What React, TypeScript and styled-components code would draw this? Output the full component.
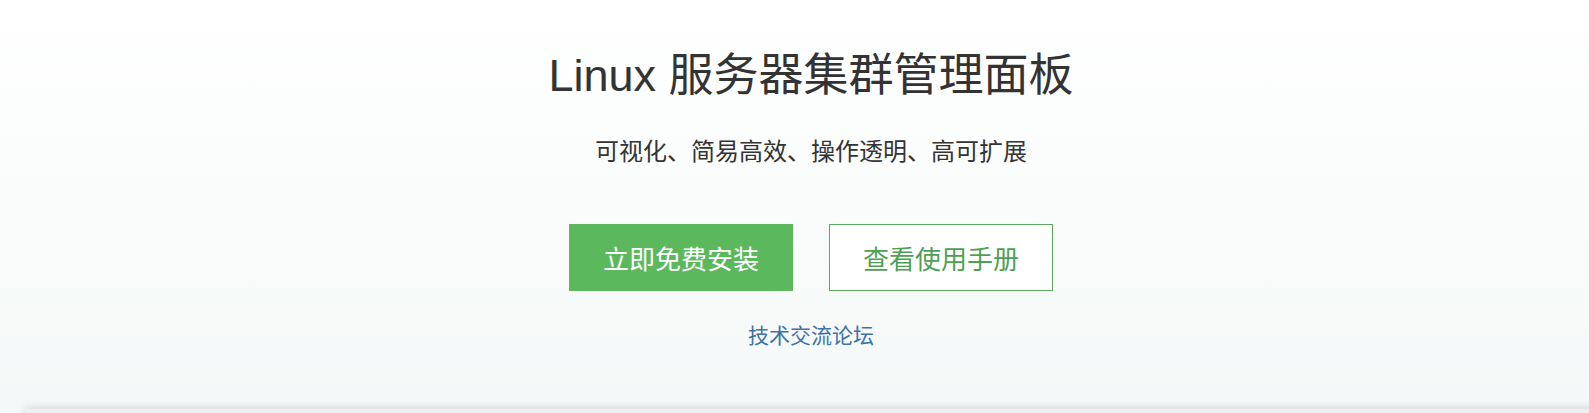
import styled, { createGlobalStyle } from 'styled-components'

const GlobalStyle = createGlobalStyle`
  html, body {
    margin: 0;
    padding: 0;
    overflow: hidden;
  }

  body {
    background: #f6f9f9;
    font-family: "Microsoft YaHei", "Liberation Sans", "Noto Sans CJK SC", sans-serif;
    color: #333;
  }
`

// Hero banner with install actions and forum link.
export default function App() {
  return (
    <Page>
      <GlobalStyle />
      <Hero>
        <Title>Linux 服务器集群管理面板</Title>
        <Subtitle>可视化、简易高效、操作透明、高可扩展</Subtitle>
        <Actions>
          <ActionButton $primary>立即免费安装</ActionButton>
          <ActionButton>查看使用手册</ActionButton>
        </Actions>
        <ForumLink href="#">技术交流论坛</ForumLink>
      </Hero>
      <Card />
    </Page>
  )
}

const Page = styled.div`
  height: 413px;
  overflow: hidden;
  background: linear-gradient(to bottom, #ffffff 0%, #f5f8f8 100%);
`

const Hero = styled.section`
  display: flex;
  flex-direction: column;
  align-items: center;
  padding: 44px 0 0 33px;
  height: 361px;
  box-sizing: border-box;
`

const Title = styled.h1`
  margin: 0;
  font-size: 45px;
  font-weight: 400;
  line-height: 64px;
  color: #333;
`

const Subtitle = styled.p`
  margin: 27px 0 0;
  font-size: 24px;
  line-height: 34px;
  color: #333;
`

const Actions = styled.div`
  display: flex;
  gap: 36px;
  margin-top: 55px;
`

const ActionButton = styled.a<{ $primary?: boolean }>`
  display: flex;
  align-items: center;
  justify-content: center;
  width: 224px;
  height: 67px;
  box-sizing: border-box;
  font-size: 26px;
  cursor: pointer;
  border: 1px solid ${({ $primary }) => ($primary ? '#5cb85c' : '#5ca95f')};
  background: ${({ $primary }) => ($primary ? '#5cb85c' : '#ffffff')};
  color: ${({ $primary }) => ($primary ? '#ffffff' : '#4f9f55')};
`

const ForumLink = styled.a`
  margin-top: 31px;
  font-size: 21px;
  line-height: 28px;
  color: #3d72a8;
  text-decoration: none;
`

const Card = styled.div`
  height: 60px;
  margin: 48px -20px 0 25px;
  background: #efefef;
  box-shadow: 0 -2px 8px rgba(0, 0, 0, 0.12);
`
